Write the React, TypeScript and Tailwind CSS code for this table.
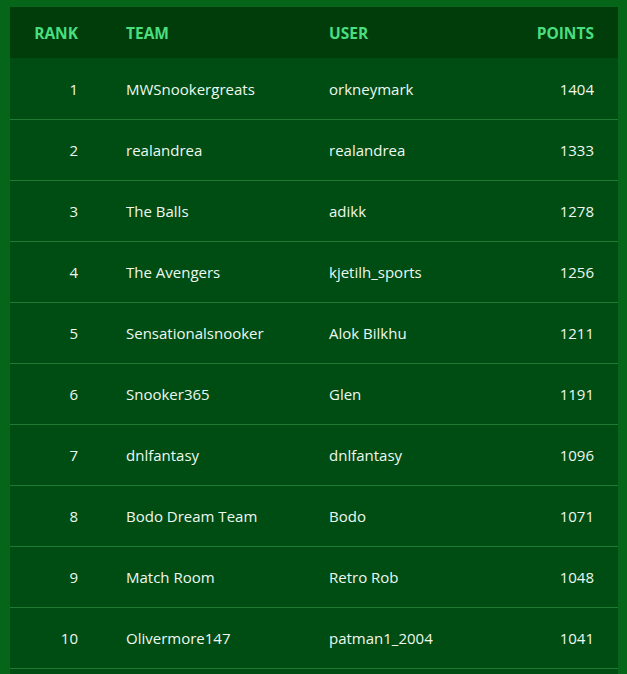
const rows = [
  { rank: 1, team: 'MWSnookergreats', user: 'orkneymark', points: 1404 },
  { rank: 2, team: 'realandrea', user: 'realandrea', points: 1333 },
  { rank: 3, team: 'The Balls', user: 'adikk', points: 1278 },
  { rank: 4, team: 'The Avengers', user: 'kjetilh_sports', points: 1256 },
  { rank: 5, team: 'Sensationalsnooker', user: 'Alok Bilkhu', points: 1211 },
  { rank: 6, team: 'Snooker365', user: 'Glen', points: 1191 },
  { rank: 7, team: 'dnlfantasy', user: 'dnlfantasy', points: 1096 },
  { rank: 8, team: 'Bodo Dream Team', user: 'Bodo', points: 1071 },
  { rank: 9, team: 'Match Room', user: 'Retro Rob', points: 1048 },
  { rank: 10, team: 'Olivermore147', user: 'patman1_2004', points: 1041 },
]

export default function App() {
  return (
    <div className="min-h-screen bg-[#05661a] pl-[10px] pr-[9px] pt-[7px] font-['Open_Sans',sans-serif] text-[15px]">
      <table className="w-full border-collapse table-fixed">
        <colgroup>
          <col className="w-[92px]" />
          <col className="w-[203px]" />
          <col />
          <col className="w-[120px]" />
        </colgroup>
        <thead>
          <tr className="bg-[#003d0a] h-[51px] text-[#4ade80] font-bold text-[15.5px]">
            <th className="px-6 pt-[2px] text-right">RANK</th>
            <th className="px-6 pt-[2px] text-left">TEAM</th>
            <th className="px-6 pt-[2px] text-left">USER</th>
            <th className="px-6 pt-[2px] text-right">POINTS</th>
          </tr>
        </thead>
        <tbody>
          {rows.map((r) => (
            <tr key={r.rank} className="bg-[#004d13] h-[61px] border-b border-[#1f7a33] text-[#eef8ef]">
              <td className="px-6 pt-[2px] text-right">{r.rank}</td>
              <td className="px-6 pt-[2px]">{r.team}</td>
              <td className="px-6 pt-[2px]">{r.user}</td>
              <td className="px-6 pt-[2px] text-right">{r.points}</td>
            </tr>
          ))}
          <tr className="bg-[#004d13] h-[61px]">
            <td colSpan={4}></td>
          </tr>
        </tbody>
      </table>
    </div>
  )
}
